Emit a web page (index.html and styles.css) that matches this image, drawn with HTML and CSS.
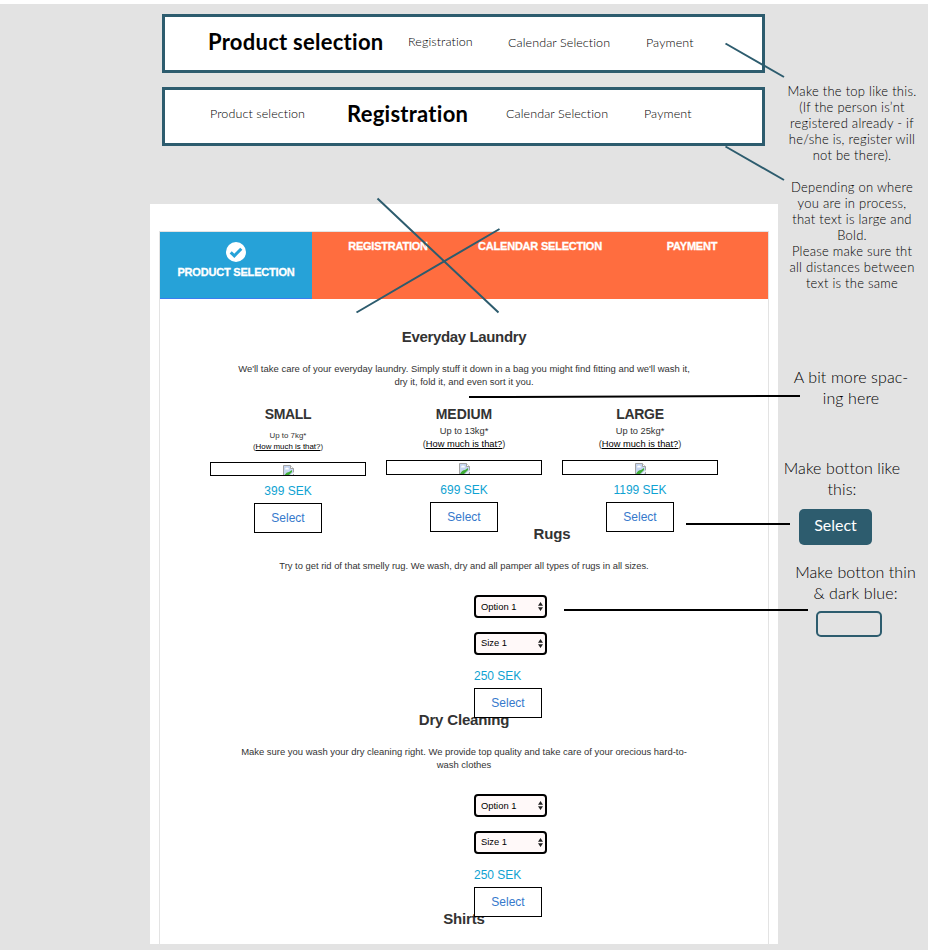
FILE: index.html
```html
<!DOCTYPE html>
<html lang="en">
<head>
<meta charset="utf-8">
<title>Product selection</title>
<link rel="stylesheet" href="styles.css">
</head>
<body>
<svg class="defs" width="0" height="0">
  <symbol id="broken" viewBox="0 0 11 12">
    <path d="M.5.5h7l3 3v8H.5z" fill="#c5d5f0" stroke="#a3a3a3"/>
    <path d="M7.500.5v3h3" fill="#fff" stroke="#a3a3a3"/>
    <path d="M2 4.500q0-2 2-2t2 2z" fill="#fff"/>
    <path d="M1 11q2-4 5-4l3-2v2l-5 5H1z" fill="#3fad35"/>
    <path d="M5.500 12L11 7v1.500l-4 3.500z" fill="#fff"/>
  </symbol>
  <symbol id="updown" viewBox="0 0 5 9">
    <path d="M0 3.800L2.500 0 5 3.800zM0 5.200L2.500 9 5 5.200z" fill="#222"/>
  </symbol>
</svg>
<div class="board">
  <main class="main">
    <nav class="steps steps-one">
      <span class="current">Product selection</span><span class="raised">Registration</span><span>Calendar Selection</span><span>Payment</span>
    </nav>
    <nav class="steps steps-two">
      <span>Product selection</span><span class="current">Registration</span><span>Calendar Selection</span><span>Payment</span>
    </nav>
    <div class="panel">
      <div class="card">
        <div class="tabs">
          <div class="tab active">
            <svg class="check" viewBox="0 0 20 20"><circle cx="10" cy="10" r="10" fill="#fff"/><path d="M4.700 10.300l3.600 3.500 7-7.100" fill="none" stroke="#26a2d8" stroke-width="3"/></svg>
            <span>PRODUCT SELECTION</span>
          </div>
          <div class="tab">REGISTRATION</div>
          <div class="tab">CALENDAR SELECTION</div>
          <div class="tab payment">PAYMENT</div>
        </div>
        <section>
          <h2 class="first">Everyday Laundry</h2>
          <p class="laundry-text">We'll take care of your everyday laundry. Simply stuff it down in a bag you might find fitting and we'll wash it,<br>dry it, fold it, and even sort it you.</p>
          <div class="sizes">
            <div class="size small">
              <h3>SMALL</h3>
              <div class="info">Up to 7kg*<br>(<u>How much is that?</u>)</div>
              <div class="image"><svg><use href="#broken"/></svg></div>
              <div class="price">399 SEK</div>
              <button class="select">Select</button>
            </div>
            <div class="size">
              <h3>MEDIUM</h3>
              <div class="info">Up to 13kg*<br>(<u>How much is that?</u>)</div>
              <div class="image"><svg><use href="#broken"/></svg></div>
              <div class="price">699 SEK</div>
              <button class="select">Select</button>
            </div>
            <div class="size">
              <h3>LARGE</h3>
              <div class="info">Up to 25kg*<br>(<u>How much is that?</u>)</div>
              <div class="image"><svg><use href="#broken"/></svg></div>
              <div class="price">1199 SEK</div>
              <button class="select">Select</button>
            </div>
          </div>
        </section>
        <section>
          <h2 class="rugs">Rugs</h2>
          <p>Try to get rid of that smelly rug. We wash, dry and all pamper all types of rugs in all sizes.</p>
          <div class="options">
            <div class="dropdown">Option 1<svg><use href="#updown"/></svg></div>
            <div class="dropdown"><span class="size-label">Size 1</span><svg><use href="#updown"/></svg></div>
            <div class="price">250 SEK</div>
            <button class="select">Select</button>
          </div>
        </section>
        <section>
          <h2 class="dry">Dry Cleaning</h2>
          <p class="dry-text">Make sure you wash your dry cleaning right. We provide top quality and take care of your orecious hard-to-<br>wash clothes</p>
          <div class="options">
            <div class="dropdown">Option 1<svg><use href="#updown"/></svg></div>
            <div class="dropdown"><span class="size-label">Size 1</span><svg><use href="#updown"/></svg></div>
            <div class="price">250 SEK</div>
            <button class="select">Select</button>
          </div>
        </section>
        <h2 class="shirts">Shirts</h2>
      </div>
    </div>
  </main>
  <aside class="notes">
    <p class="note-top">Make the top like this.<br>(If the person is’nt<br>registered already - if<br>he/she is, register will<br>not be there).<br><br>Depending on where<br>you are in process,<br>that text is large and<br>Bold.<br>Please make sure tht<br>all distances between<br>text is the same</p>
    <p class="note spacing">A bit more spac-<br>ing here</p>
    <p class="note botton">Make botton like<br>this:</p>
    <div class="sample">Select</div>
    <p class="note thin">Make botton thin<br>&amp; dark blue:</p>
    <div class="outline"></div>
  </aside>
  <svg class="lines" viewBox="0 0 928 950">
    <g stroke="#2d5c6e" stroke-width="2">
      <path d="M725.500 43.500L784 77M725.500 146.500L784 180M377.500 198.500L498.500 312.500M356.500 312.500L499.500 229"/>
    </g>
    <g stroke="#000" stroke-width="2">
      <path d="M469 397L800 396M686 524H790M564 610H808"/>
    </g>
  </svg>
</div>
</body>
</html>
```

FILE: styles.css
```css
* { box-sizing: border-box; }
body { margin: 0; background: #fff; }
h2, h3, p { margin: 0; }
.defs { position: absolute; }
.board {
  position: relative;
  width: 928px;
  height: 950px;
  border-top: 4px solid #fff;
  background: #e3e3e3;
  display: grid;
  grid-template-columns: 628px 150px;
  padding-left: 150px;
  overflow: hidden;
}
.lines { position: absolute; left: 0; top: -4px; width: 928px; height: 950px; pointer-events: none; z-index: 3; }

.steps {
  width: 603px;
  height: 59px;
  margin-left: 12px;
  border: 3px solid #2d5c6e;
  background: #fff;
  display: grid;
  align-items: center;
  font: 300 12.500px/20px Lato, sans-serif;
  font-variant-ligatures: none;
  letter-spacing: .1px;
  color: #000;
  white-space: nowrap;
}
.steps-one { margin-top: 10px; padding-left: 43px; grid-template-columns: 200px 100px 138px 60px; padding-bottom: 2px; }
.steps-two { margin-top: 14px; padding-left: 45px; grid-template-columns: 137px 159px 138px 60px; padding-bottom: 5px; }
.steps .current { font-size: 22px; font-weight: 700; letter-spacing: .26px; }
.steps-one .current { position: relative; top: -1px; }
.steps .raised { position: relative; top: -1px; }

.panel { margin-top: 58px; height: 740px; background: #fff; padding: 27px 9px 0; font-family: "Liberation Sans", Arial, sans-serif; color: #333; }
.card { height: 713px; border: 1px solid #e3e3e3; border-bottom: 0; }
.tabs { display: grid; grid-template-columns: repeat(4, 152px); height: 67px; background: #ff6d3f; }
.tab { padding-top: 7px; text-align: center; color: #fff; font-size: 11px; line-height: 15px; font-weight: 700; letter-spacing: -.22px; white-space: nowrap; -webkit-text-stroke: .3px #fff; }
.tab.active { background: #26a2d8; border-bottom: 1px solid #3b7cf0; padding-top: 10px; display: flex; flex-direction: column; align-items: center; letter-spacing: -.19px; }
.check { width: 20px; height: 20px; margin-bottom: 3px; }

h2 { font-size: 15px; line-height: 20px; text-align: center; letter-spacing: -.18px; }
.first { margin-top: 28px; letter-spacing: -.36px; }
section p { margin-top: 15px; font-size: 9.380px; line-height: 13px; text-align: center; white-space: nowrap; position: relative; top: .5px; }
section .laundry-text { font-size: 9.490px; top: -.5px; }
section .dry-text { font-size: 9.450px; top: -.5px; }
.sizes { display: grid; grid-template-columns: repeat(3, 176px); padding-left: 40px; margin-top: 16px; height: 129px; }
.size { display: flex; flex-direction: column; align-items: center; }
h3 { font-size: 14px; line-height: 20px; letter-spacing: -.3px; }
.size:nth-child(2) h3 { letter-spacing: -.05px; }
.info { font-size: 9.300px; line-height: 13px; text-align: center; position: relative; top: 1px; }
.info u { color: #000; text-underline-offset: 1px; }
.image { margin-top: 10px; width: 156px; height: 15px; border: 1px solid #000; display: flex; justify-content: center; padding-top: 2px; overflow: hidden; }
.image svg { width: 11px; height: 12px; flex: none; }
.price { margin-top: 7px; font-size: 12px; line-height: 16px; color: #0fa2d2; }
.select {
  position: relative;
  z-index: 1;
  margin: 4px 0 0;
  padding: 0;
  width: 68px;
  height: 30px;
  flex: none;
  border: 1px solid #000;
  background: #fff;
  color: #3679cc;
  font: 12px/28px "Liberation Sans", Arial, sans-serif;
  display: block;
}
.small .info { margin-top: 6px; font-size: 7.900px; line-height: 11px; top: 0; }
.small .image { height: 14px; }
.rugs { margin-top: -9px; padding-left: 176px; }
.dry, .shirts { margin-top: -8px; }
.options { margin: 23px 0 0 314px; width: 73px; }
.dropdown {
  height: 23px;
  margin-bottom: 14px;
  padding: 0 2px 0 5px;
  border: 2px solid #000;
  border-radius: 4px;
  background: #fff9f9;
  color: #000;
  font-size: 9.400px;
  display: flex;
  justify-content: space-between;
  align-items: center;
}
.dropdown svg { width: 5px; height: 9px; }
.size-label { padding-bottom: 2px; }
.options .price { margin-top: -1px; }

.notes { font-family: Lato, sans-serif; font-weight: 300; font-variant-ligatures: none; color: #000; text-align: center; white-space: nowrap; }
.note-top { margin-top: 79px; font-size: 13px; line-height: 16px; letter-spacing: .25px; padding-right: 2px; }
.note { font-size: 16px; line-height: 21px; letter-spacing: .1px; }
.spacing { margin-top: 75px; padding-right: 4px; }
.botton { margin-top: 49px; padding-right: 22px; }
.sample { margin: 10px 0 0 21px; width: 73px; height: 36px; border-radius: 5px; background: #2d5c6e; color: #fff; font-size: 16px; line-height: 32px; font-weight: 400; }
.thin { margin-top: 16px; padding-left: 5px; position: relative; top: -.5px; }
.outline { margin: 8px 0 0 38px; width: 66px; height: 26px; border: 2px solid #2d5c6e; border-radius: 5px; }
```
